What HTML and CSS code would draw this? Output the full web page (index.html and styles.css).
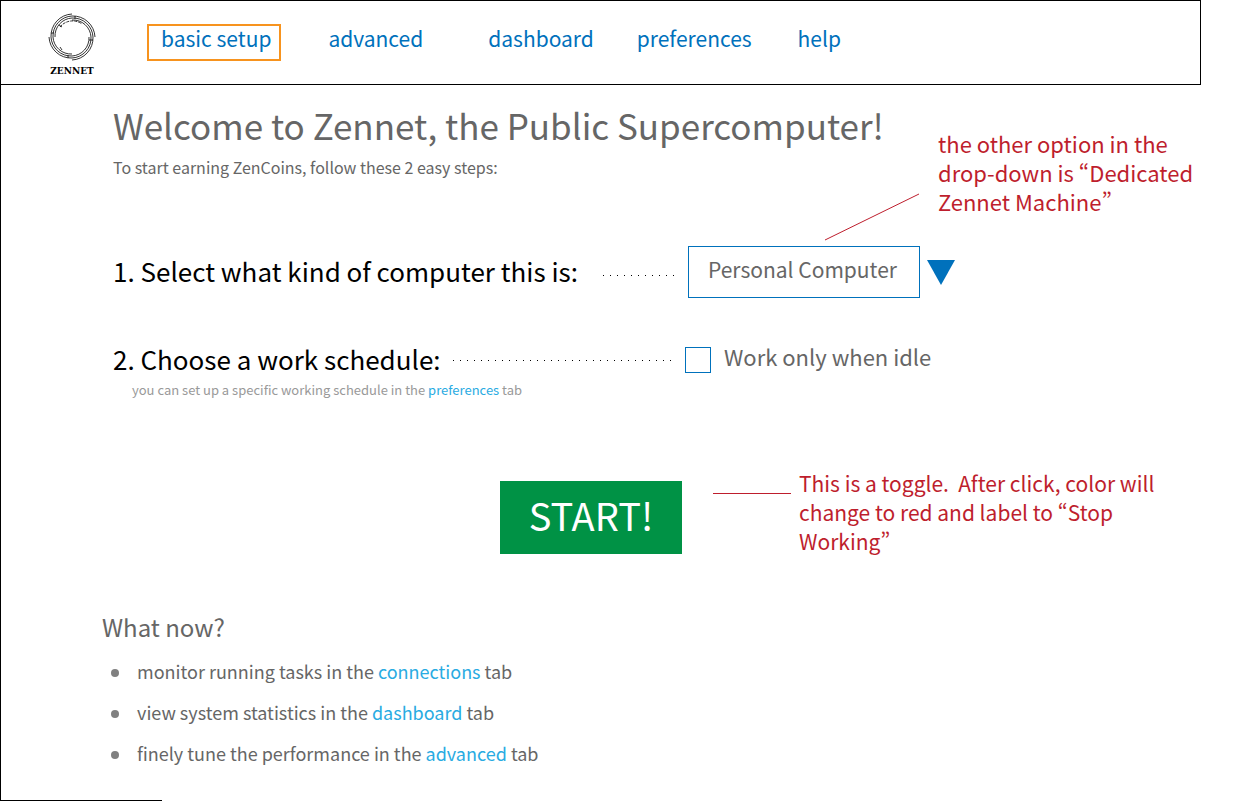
FILE: index.html
```html
<!DOCTYPE html>
<html lang="en">
<head>
<meta charset="utf-8">
<title>Zennet – basic setup</title>
<link rel="stylesheet" href="styles.css">
</head>
<body>
<div class="page">
  <header class="topbar">
    <a class="logo" href="#" aria-label="Zennet home">
      <svg class="logo-mark" viewBox="0 0 48 48" fill="none" stroke="#000" aria-hidden="true">
        <defs>
          <path id="swirl" d="M24 1A22 22 0 0 0 3 24A20 20 0 0 0 24 43A18 18 0 0 0 41 24" />
        </defs>
        <use href="#swirl" />
        <use href="#swirl" transform="rotate(90 24 24)" />
        <use href="#swirl" transform="rotate(180 24 24)" />
        <use href="#swirl" transform="rotate(270 24 24)" />
        <path d="M12 14A16 16 0 0 1 34 11" stroke-dasharray="3 1" />
        <path d="M27 3v3M3 20h3M41 27h4M20 42v3M12 34l2 3M11 12l3 2" />
      </svg>
      <span class="logo-name">ZENNET</span>
    </a>
    <nav class="tabs">
      <a class="tab tab-active" href="#basic">basic setup</a>
      <a class="tab tab-advanced" href="#advanced">advanced</a>
      <a class="tab tab-dashboard" href="#dashboard">dashboard</a>
      <a class="tab tab-preferences" href="#preferences">preferences</a>
      <a class="tab" href="#help">help</a>
    </nav>
  </header>

  <main class="content">
    <section class="intro">
      <div class="intro-text">
        <h1 class="title">Welcome to Zennet, the Public Supercomputer!</h1>
        <p class="subtitle">To start earning ZenCoins, follow these 2 easy steps:</p>
      </div>
      <p class="note note-select">the other option in the<br>drop-down is “Dedicated<br>Zennet Machine”
        <svg class="pointer" viewBox="0 0 96 48" aria-hidden="true"><path d="M1 47L95 1" stroke="#be1e2d" fill="none"/></svg>
      </p>
    </section>

    <section class="step step-kind">
      <div class="step-head">
        <label class="step-label" for="kind">1. Select what kind of computer this is:</label>
        <span class="leader leader-kind"></span>
      </div>
      <select class="kind" id="kind">
        <option>Personal Computer</option>
        <option>Dedicated Zennet Machine</option>
      </select>
      <svg class="arrow" viewBox="0 0 28 25" aria-hidden="true"><path d="M0 0H28L14 25Z" fill="#0071bc"/></svg>
    </section>

    <section class="step step-schedule">
      <div class="step-head">
        <h2 class="step-label">2. Choose a work schedule:</h2>
        <span class="leader"></span>
      </div>
      <input class="idle" id="idle" type="checkbox">
      <label class="idle-label" for="idle">Work only when idle</label>
    </section>
    <p class="hint">you can set up a specific working schedule in the <a class="link" href="#preferences">preferences</a> tab</p>

    <section class="action">
      <button class="start" type="button">START!</button>
      <span class="rule"></span>
      <p class="note note-start">This is a toggle.&nbsp; After click, color will<br>change to red and label to “Stop<br>Working”</p>
    </section>

    <section class="next">
      <h2 class="next-title">What now?</h2>
      <ul class="next-list">
        <li class="next-item">monitor running tasks in the <a class="link" href="#connections">connections</a> tab</li>
        <li class="next-item">view system statistics in the <a class="link" href="#dashboard">dashboard</a> tab</li>
        <li class="next-item">finely tune the performance in the <a class="link" href="#advanced">advanced</a> tab</li>
      </ul>
    </section>
  </main>
  <div class="page-end"></div>
</div>
</body>
</html>
```
FILE: styles.css
```css
* { box-sizing: border-box; }
body {
  margin: 0;
  background: #fff;
  color: #666;
  font-family: "Noto Sans CJK SC", "Noto Sans", sans-serif;
}
h1, h2, p, ul { margin: 0; padding: 0; font-weight: 400; }
a { text-decoration: none; }

.page {
  display: flex;
  flex-direction: column;
  min-height: 100vh;
  border-left: 1px solid #000;
}
.page-end {
  width: 13%;
  margin-top: auto;
  border-top: 1px solid #000;
}

.topbar {
  display: flex;
  align-items: flex-start;
  margin-right: 39px;
  padding: 12px 0 7px 47px;
  border: 1px solid #000;
  border-left: 0;
}
.logo {
  display: flex;
  flex-direction: column;
  align-items: center;
  width: 48px;
  color: #000;
}
.logo-mark { width: 48px; height: 48px; stroke-width: 0.8; }
.logo-name {
  font: bold 9px/12px "DejaVu Serif", serif;
  margin-top: 4px;
}
.tabs {
  display: flex;
  align-items: flex-start;
  margin: 11px 0 0 51px;
}
.tab {
  padding-top: 3px;
  color: #0071bc;
  font-size: 21px;
  line-height: 22px;
}
.tab-active {
  margin-right: 47px;
  padding: 1px 8px 10px 12px;
  border: 2px solid #f7931e;
}
.tab-advanced { margin-right: 65px; }
.tab-dashboard { margin-right: 43px; }
.tab-preferences { margin-right: 46px; }

.content { padding: 16px 0 0 112px; }
.intro { display: flex; align-items: flex-start; gap: 60px; }
.intro-text { width: 765px; }
.title { font-size: 35px; line-height: 48px; white-space: nowrap; }
.subtitle { margin-top: 6px; font-size: 16px; line-height: 24px; }
.note {
  color: #be1e2d;
  line-height: 29px;
  white-space: nowrap;
  font-variant-east-asian: proportional-width;
}
.note-select { position: relative; margin-top: 28px; font-size: 22px; }
.note-start { margin-top: 1px; font-size: 21px; }
.pointer {
  position: absolute;
  right: 100%;
  top: 64px;
  width: 96px;
  height: 48px;
  margin-right: 18px;
}

.step { display: flex; align-items: center; }
.step-head {
  display: flex;
  align-items: center;
  color: #000;
}
.step-label {
  padding-bottom: 2px;
  font-size: 26px;
  line-height: 36px;
  white-space: nowrap;
}
.leader {
  flex: 1;
  height: 1px;
  margin: 0 13px 0 12px;
  background: repeating-linear-gradient(to right, #000 0 1px, transparent 1px 7px);
}
.leader-kind { margin: 6px 12px 0 25px; }
.step-kind { margin-top: 30px; }
.step-kind .step-head { width: 575px; }
.kind {
  appearance: none;
  width: 232px;
  height: 52px;
  padding: 0 0 6px 19px;
  border: 1px solid #0071bc;
  border-radius: 0;
  background: #fff;
  color: #666;
  font-family: inherit;
  font-size: 21px;
}
.arrow { width: 28px; height: 25px; margin-left: 7px; }
.step-schedule { margin-top: 43px; }
.step-schedule .step-head { width: 572px; }
.idle {
  appearance: none;
  width: 26px;
  height: 26px;
  margin: 0 13px 0 0;
  border: 1px solid #0071bc;
  background: #fff;
}
.idle:checked { background: #0071bc; }
.idle-label { font-size: 22px; line-height: 28px; padding-bottom: 8px; }
.hint {
  margin-top: 1px;
  padding-left: 19px;
  color: #999;
  font-size: 13px;
  line-height: 20px;
}
.link { color: #29abe2; }

.action { display: flex; align-items: flex-start; margin: 68px 0 0 387px; }
.start {
  width: 182px;
  height: 73px;
  margin-top: 13px;
  padding: 0 0 6px;
  border: 0;
  background: #009245;
  color: #fff;
  font-family: inherit;
  font-size: 38px;
}
.start:hover { background: #00853f; }
.rule {
  width: 78px;
  margin: 25px 8px 0 31px;
  border-top: 1px solid #be1e2d;
}

.next { margin: 55px 0 0 -11px; }
.next-title { font-size: 24px; line-height: 32px; }
.next-list {
  display: grid;
  gap: 17px;
  margin: 16px 0 0 9px;
  list-style: none;
}
.next-item {
  display: block;
  font-size: 18px;
  line-height: 24px;
}
.next-item::before {
  content: "";
  display: inline-block;
  width: 8px;
  height: 8px;
  margin: 0 18px 2px 0;
  border-radius: 50%;
  background: #808080;
}
```
